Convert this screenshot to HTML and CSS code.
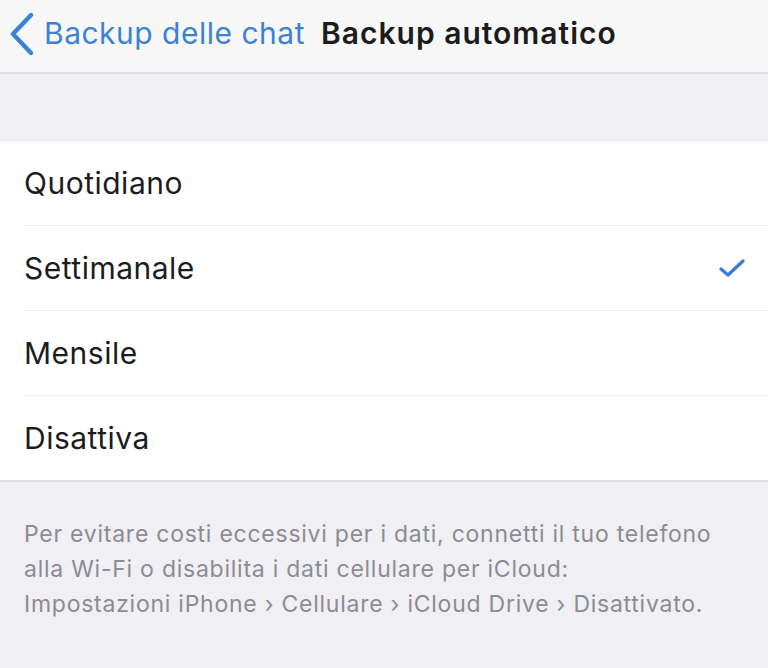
FILE: index.html
```html
<!DOCTYPE html>
<html lang="it">
<head>
<meta charset="utf-8">
<link rel="stylesheet" href="styles.css">
</head>
<body>
<header class="nav">
  <div class="back">
    <svg class="chev" width="28" height="44" viewBox="0 0 28 44"><path d="M23 3 L5 22 L23 41" fill="none" stroke="#3b82d6" stroke-width="4.4" stroke-linecap="round" stroke-linejoin="round"/></svg>
    <span class="back-label">Backup delle chat</span>
  </div>
  <h1 class="title">Backup automatico</h1>
</header>
<div class="spacer"></div>
<ul class="list">
  <li class="row"><span>Quotidiano</span></li>
  <li class="row"><span>Settimanale</span>
    <svg class="check" width="28" height="22" viewBox="0 0 28 22"><path d="M3 12 L10 18 L25 4" fill="none" stroke="#3b7fd4" stroke-width="3.4" stroke-linecap="round" stroke-linejoin="round"/></svg>
  </li>
  <li class="row"><span>Mensile</span></li>
  <li class="row"><span>Disattiva</span></li>
</ul>
<p class="footer">Per evitare costi eccessivi per i dati, connetti il tuo telefono<br>alla Wi-Fi o disabilita i dati cellulare per iCloud:<br>Impostazioni iPhone › Cellulare › iCloud Drive › Disattivato.</p>
</body>
</html>
```
FILE: styles.css
```css
html, body {
  margin: 0;
  padding: 0;
  background: #efeff4;
  font-family: Inter, "Noto Sans", sans-serif;
  width: 768px;
  height: 668px;
  overflow: hidden;
}
.nav {
  background: #f7f7f7;
  border-bottom: 2px solid #e0e0e4;
  display: flex;
  align-items: center;
  padding-bottom: 6px;
  box-sizing: border-box;
  height: 74px;
}
.back {
  display: flex;
  align-items: center;
  padding-left: 8px;
  color: #3b82d6;
}
.chev {
  display: block;
  margin-right: 8px;
  margin-top: 2px;
}
.back-label {
  font-size: 30px;
  letter-spacing: 0.5px;
}
.title {
  margin: 0 0 0 16px;
  font-size: 30px;
  font-weight: 600;
  letter-spacing: 1px;
  color: #1c1c1e;
}
.spacer {
  height: 66px;
}
.list {
  list-style: none;
  margin: 0;
  padding: 0 0 0 24px;
  background: #fff;
  border-top: 1px solid #e6e6ea;
  border-bottom: 2px solid #dedee2;
}
.row {
  height: 84px;
  display: flex;
  align-items: center;
  justify-content: space-between;
  padding-right: 22px;
  border-bottom: 1px solid #ececee;
  font-size: 30px;
  letter-spacing: 0.5px;
  color: #1c1c1e;
}
.row:last-child {
  border-bottom: none;
}
.check {
  display: block;
}
.footer {
  margin: 0;
  padding: 35px 24px 0 24px;
  font-size: 23px;
  letter-spacing: 0.75px;
  line-height: 35px;
  color: #8c8c91;
  white-space: nowrap;
}
```
